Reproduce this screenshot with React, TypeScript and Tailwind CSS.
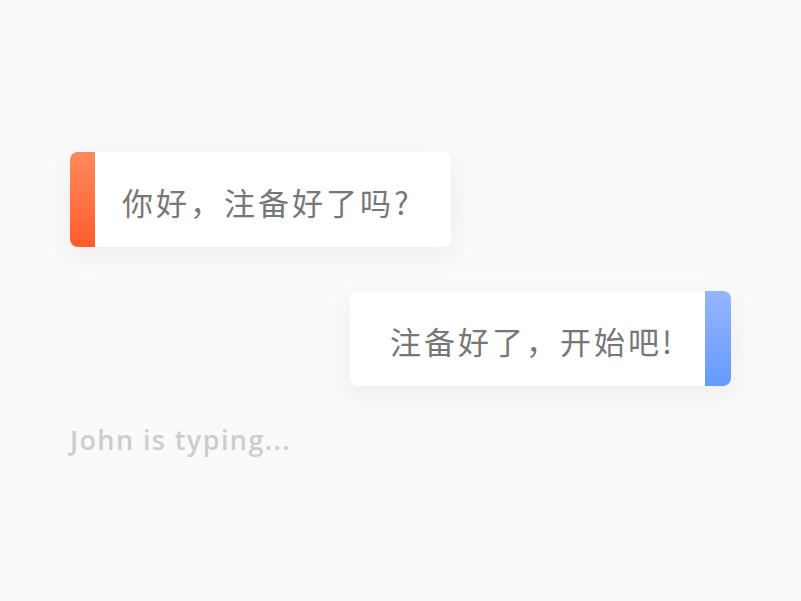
export default function App() {
  const cjk = { fontFamily: '"Noto Sans CJK SC", "Noto Sans", sans-serif' };

  return (
    <div className="w-[801px] h-[601px] bg-[#fafafa] px-[70px] pt-[152px] flex flex-col">
      {/* incoming */}
      <div className="w-[381px] h-[95px] flex rounded-lg bg-white shadow-[0_8px_30px_rgba(0,0,0,0.06)] overflow-hidden">
        <div className="w-[25px] shrink-0 bg-gradient-to-b from-[#ff8a5b] to-[#ff5a2c]" />
        <div className="flex-1 flex items-center pl-[27px] pt-[6px] text-[31px] tracking-[3px] text-[#777]" style={cjk}>
          你好，注备好了吗?
        </div>
      </div>

      {/* outgoing */}
      <div className="self-end mt-[44px] w-[381px] h-[95px] flex rounded-lg bg-white shadow-[0_8px_30px_rgba(0,0,0,0.06)] overflow-hidden">
        <div className="flex-1 flex items-center pl-[40px] pt-[6px] text-[31px] tracking-[3px] text-[#777]" style={cjk}>
          注备好了，开始吧!
        </div>
        <div className="w-[26px] shrink-0 bg-gradient-to-b from-[#97b4ff] to-[#639bff]" />
      </div>

      <p className="mt-[34px] text-[27px] font-semibold tracking-[1.4px] text-[#cdcdcd]" style={{ fontFamily: '"Open Sans", Lato, sans-serif' }}>
        John is typing...
      </p>
    </div>
  );
}
